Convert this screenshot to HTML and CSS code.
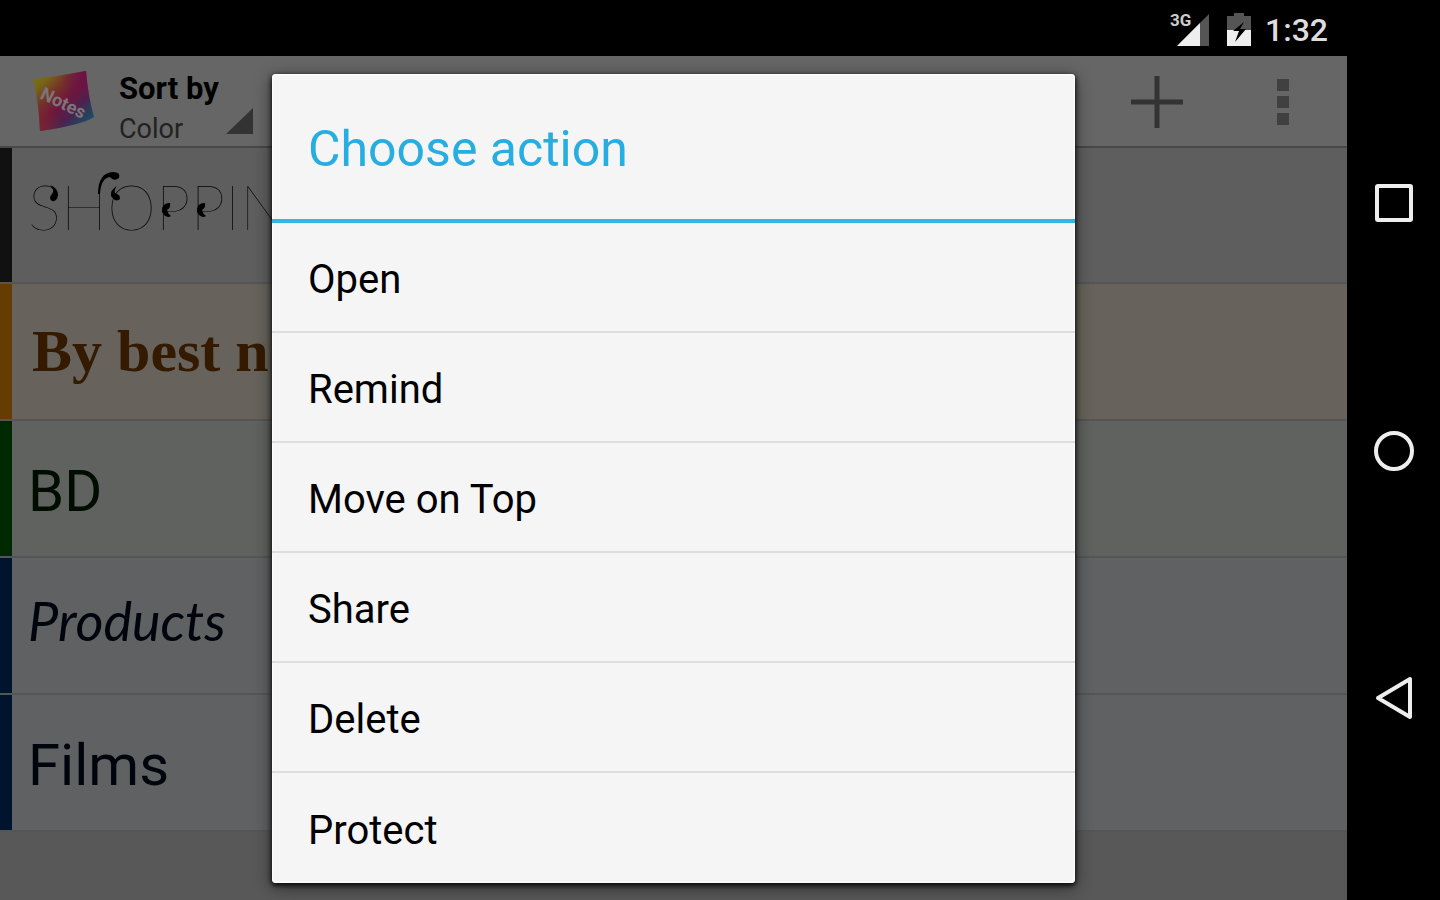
FILE: index.html
```html
<!DOCTYPE html>
<html lang="en">
  <head>
    <meta charset="UTF-8">
    <meta name="viewport" content="width=device-width, initial-scale=1">
    <title>Notes</title>
    <link rel="stylesheet" href="styles.css">
  </head>
  <body>
    <div class="screen">
      <div class="statusbar">
        <svg class="signal" width="42" height="38" viewBox="0 0 42 38">
          <path d="M40 3V35H8Z" fill="#555"/>
          <path d="M31 12V35H8Z" fill="#eee"/>
          <text x="1" y="15" class="network">3G</text>
        </svg>
        <svg class="battery" width="24" height="34" viewBox="0 0 24 34">
          <path d="M7 0h10v3h7v14H0V3h7Z" fill="#555"/>
          <path d="M0 17h24v16H0Z" fill="#eee"/>
          <path d="M17 9 6 18h6L8 29 19 16h-6Z" fill="#000"/>
        </svg>
        <time class="clock">1:32</time>
      </div>

      <main class="app">
        <header class="toolbar">
          <svg class="logo" width="64" height="64" viewBox="0 0 64 64">
            <defs>
              <linearGradient id="base" x1="0" y1="0" x2="1" y2="1">
                <stop offset="0" stop-color="#7a7410"/>
                <stop offset=".18" stop-color="#786418"/>
                <stop offset=".34" stop-color="#743428"/>
                <stop offset=".5" stop-color="#70163c"/>
                <stop offset=".68" stop-color="#4a2250"/>
                <stop offset=".85" stop-color="#1c4a64"/>
                <stop offset="1" stop-color="#17606c"/>
              </linearGradient>
              <radialGradient id="corner" cx="0" cy="1" r=".5">
                <stop offset="0" stop-color="#7a2a2c"/>
                <stop offset="1" stop-color="#7a2a2c" stop-opacity="0"/>
              </radialGradient>
              <radialGradient id="pink" cx=".9" cy="0" r=".5">
                <stop offset="0" stop-color="#6c1048"/>
                <stop offset="1" stop-color="#6c1048" stop-opacity="0"/>
              </radialGradient>
            </defs>
            <path d="M1 9Q28 6 54 1Q56 26 62 47Q50 55 8 61Q7 34 1 9Z" fill="url(#base)"/>
            <path d="M1 9Q28 6 54 1Q56 26 62 47Q50 55 8 61Q7 34 1 9Z" fill="url(#corner)"/>
            <path d="M1 9Q28 6 54 1Q56 26 62 47Q50 55 8 61Q7 34 1 9Z" fill="url(#pink)"/>
            <text x="7" y="28" transform="rotate(26 7 28)" class="logo-text">Notes</text>
          </svg>
          <button class="sort">
            <span class="sort-text">
              <span class="sort-label">Sort by</span>
              <span class="sort-value">Color</span>
            </span>
            <svg class="corner" width="27" height="26" viewBox="0 0 27 26"><path d="M27 0V26H0Z" fill="#333"/></svg>
          </button>
          <button class="tool add" aria-label="Add note">
            <svg width="54" height="54" viewBox="0 0 54 54"><path d="M27 1V53M1 27H53" stroke="#333" stroke-width="5"/></svg>
          </button>
          <button class="tool more" aria-label="More options">
            <svg width="12" height="48" viewBox="0 0 12 48"><path d="M0 1h12v12H0ZM0 18h12v12H0ZM0 35h12v12H0Z" fill="#404040"/></svg>
          </button>
        </header>

        <ul class="notes">
          <li class="note black">
            <span class="name thin">SHOPPIN</span>
            <svg class="swash" width="200" height="70" viewBox="0 0 200 70">
              <g fill="#000">
                <path d="M20 15Q28 18 28 25Q27 32 22 31Q18 28 22 24Q25 20 20 15Z"/>
                <path d="M68 24Q68 3 83 2Q91 2 89 8Q84 12 80 7Q71 8 70 24Z"/>
                <path d="M87 16Q80 20 81 26Q86 33 90 29Q90 24 86 24Q83 21 87 16Z"/>
                <path d="M140 33Q131 33 132 42Q136 49 141 46Q138 44 137 40Q141 38 140 33Z"/>
                <path d="M175 33Q166 33 167 42Q171 49 176 46Q173 44 172 40Q176 38 175 33Z"/>
              </g>
            </svg>
          </li>
          <li class="note orange"><span class="name serif">By best n</span></li>
          <li class="note green"><span class="name">BD</span></li>
          <li class="note blue"><span class="name script">Products</span></li>
          <li class="note blue"><span class="name">Films</span></li>
        </ul>

        <div class="overlay">
          <section class="dialog" role="dialog" aria-labelledby="dialog-title">
            <h1 id="dialog-title">Choose action</h1>
            <button class="action">Open</button>
            <button class="action">Remind</button>
            <button class="action">Move on Top</button>
            <button class="action">Share</button>
            <button class="action">Delete</button>
            <button class="action">Protect</button>
          </section>
        </div>
      </main>
    </div>

    <nav class="navbar">
      <button aria-label="Recent apps">
        <svg width="44" height="44" viewBox="0 0 44 44"><rect x="5" y="5" width="34" height="34" rx="1"/></svg>
      </button>
      <button aria-label="Home">
        <svg width="44" height="44" viewBox="0 0 44 44"><circle cx="22" cy="22" r="18"/></svg>
      </button>
      <button aria-label="Back">
        <svg width="44" height="44" viewBox="0 0 44 44"><path d="M38 3V41L6 22Z"/></svg>
      </button>
    </nav>
  </body>
</html>
```
FILE: styles.css
```css
*{
    box-sizing: border-box;
}
body{
    margin: 0;
    display: flex;
    min-height: 100vh;
    background: #000;
    font-family: Roboto, "Liberation Sans", sans-serif;
}
button{
    margin: 0;
    padding: 0;
    border: 0;
    background: none;
    font: inherit;
    text-align: left;
}
svg{
    display: block;
}
.screen{
    flex: 1;
    display: flex;
    flex-direction: column;
    min-width: 0;
}

/* status bar */
.statusbar{
    display: flex;
    justify-content: flex-end;
    align-items: center;
    height: 56px;
    padding: 4px 19px 0 0;
}
.signal{
    margin-right: 16px;
}
.battery{
    margin-right: 14px;
}
.network{
    font-size: 17px;
    font-weight: 700;
    fill: #ccc;
}
.clock{
    font-size: 32px;
    font-weight: 500;
    line-height: 40px;
    color: #ddd;
}

/* app */
.app{
    position: relative;
    flex: 1;
    display: flex;
    flex-direction: column;
    background: #585858;
}
.toolbar{
    display: flex;
    align-items: center;
    height: 92px;
    padding: 2px 58px 0 32px;
    background: #666;
    border-bottom: 2px solid #484848;
}
.logo-text{
    font-size: 18px;
    font-weight: 700;
    fill: #7c7478;
}
.sort{
    display: flex;
    align-items: flex-end;
    margin: 0 auto 0 23px;
    padding-top: 13px;
}
.sort-text{
    display: flex;
    flex-direction: column;
    width: 107px;
}
.sort-label{
    font-size: 31px;
    line-height: 40px;
    font-weight: 700;
    color: #000;
}
.sort-value{
    font-size: 27px;
    line-height: 40px;
    color: #222;
}
.corner{
    margin-bottom: 15px;
}
.add{
    margin-right: 93px;
}

/* list */
.notes{
    margin: 0;
    padding: 0;
    list-style: none;
}
.note{
    position: relative;
    display: flex;
    align-items: center;
    height: 137px;
    border-bottom: 2px solid #545656;
    background: #5e5e5e;
    overflow: hidden;
}
.note:first-child{
    height: 136px;
}
.note::before{
    content: "";
    align-self: stretch;
    width: 12px;
    margin-right: 16px;
    background: #111;
}
.orange{
    background: #67635c;
}
.orange::before{
    background: #663d00;
}
.green{
    background: #5f625e;
}
.green::before{
    background: #002900;
}
.blue{
    background: #5f6163;
}
.blue::before{
    background: #00142e;
}
.name{
    padding-top: 4px;
    font-size: 58px;
    line-height: 72px;
    white-space: nowrap;
    color: #000;
}
.thin{
    padding: 0 0 18px;
    font-family: Lato, sans-serif;
    font-size: 62px;
    font-weight: 100;
}
.serif{
    padding: 0 0 2px 4px;
    font-family: "Liberation Serif", serif;
    font-size: 60px;
    font-weight: 700;
    color: #331a00;
}
.green .name{
    color: #000c00;
}
.blue .name{
    color: #00040c;
}
.blue .script{
    padding: 0 0 10px;
    font-family: Lato, sans-serif;
    font-size: 54px;
    font-style: italic;
}
.swash{
    position: absolute;
    left: 30px;
    top: 22px;
}

/* dialog */
.overlay{
    position: absolute;
    inset: 0;
    display: flex;
    align-items: center;
    justify-content: center;
    padding: 0 272px;
}
.dialog{
    flex: 1;
    display: flex;
    flex-direction: column;
    min-width: 400px;
    background: #f5f5f5;
    border-radius: 4px;
    box-shadow: inset 0 0 2px 1px #fff, 0 2px 4px 1px rgba(0,0,0,.75), 0 4px 16px 2px rgba(0,0,0,.4);
}
.dialog h1{
    margin: 0;
    padding: 0 36px;
    font-size: 50px;
    font-weight: 400;
    line-height: 150px;
    height: 149px;
    color: #27ade0;
    border-bottom: 4px solid #33b5e5;
}
.action{
    height: 110px;
    padding: 6px 36px 0;
    font-size: 40px;
    color: #000;
    border-bottom: 2px solid #dedede;
}
.action:last-child{
    border-bottom: 0;
}

/* navigation */
.navbar{
    display: flex;
    flex-direction: column;
    width: 93px;
    padding: 79px 0 78px;
}
.navbar button{
    flex: 1;
    display: flex;
    align-items: center;
    justify-content: center;
}
.navbar svg{
    fill: none;
    stroke: #eee;
    stroke-width: 4;
    stroke-linejoin: round;
}
```
